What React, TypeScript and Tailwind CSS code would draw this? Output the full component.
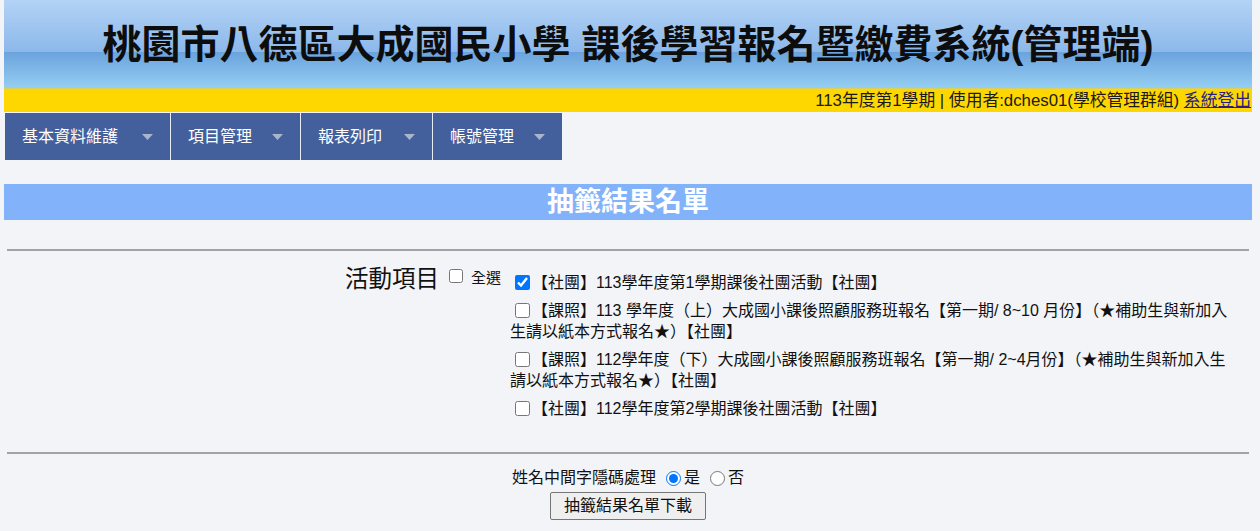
import React from "react";

const sans = "font-['Arial','Liberation_Sans','Noto_Sans_CJK_TC',sans-serif]";

function Caret() {
  return (
    <svg width="11" height="6" viewBox="0 0 11 6" className="ml-auto shrink-0">
      <path d="M0 0 L11 0 L5.5 6 Z" fill="#a9b5cf" />
    </svg>
  );
}

const navItems: { t: string; w: string }[] = [
  { t: "基本資料維護", w: "w-[165px]" },
  { t: "項目管理", w: "w-[130px]" },
  { t: "報表列印", w: "w-[132px]" },
  { t: "帳號管理", w: "w-[130px]" },
];

const items: string[] = [
  "【社團】113學年度第1學期課後社團活動【社團】",
  "【課照】113 學年度（上）大成國小課後照顧服務班報名【第一期/ 8~10 月份】（★補助生與新加入生請以紙本方式報名★）【社團】",
  "【課照】112學年度（下）大成國小課後照顧服務班報名【第一期/ 2~4月份】（★補助生與新加入生請以紙本方式報名★）【社團】",
  "【社團】112學年度第2學期課後社團活動【社團】",
];

export default function App() {
  return (
    <div className={`min-h-[531px] bg-[#f2f4f8] ${sans} text-[#111]`}>
      <div className="ml-[4px] w-[1248px]">
        {/* Header */}
        <div className="h-[88px] flex items-center justify-center bg-[linear-gradient(to_bottom,#b3d3f6_0%,#8cb8ea_59%,#6ba3dd_59.5%,#94cef2_100%)]">
          <h1 className="text-[39px] font-bold leading-none text-[#0d0d0d]">
            桃園市八德區大成國民小學 課後學習報名暨繳費系統(管理端)
          </h1>
        </div>
        {/* Yellow bar */}
        <div className="h-[24px] bg-[#ffd700] border-t border-[#d8cf60] flex items-center justify-end pr-[1px] text-[16.8px] text-[#1a1a1a]">
          <span>
            113年度第1學期 | 使用者:dches01(學校管理群組){" "}
            <a href="#" className="underline text-[#2a1d86]">系統登出</a>
          </span>
        </div>
        {/* Nav */}
        <div className="mt-[1px] ml-[1px] flex h-[47px]">
          {navItems.map((n, i) => (
            <div
              key={n.t}
              className={`flex items-center bg-[#44609c] text-white text-[16px] pl-[17px] pr-[17px] ${n.w} ${i > 0 ? "border-l border-[#e8ecf4]" : ""}`}
            >
              <span>{n.t}</span>
              <Caret />
            </div>
          ))}
        </div>
        {/* Banner */}
        <div className="mt-[24px] h-[36px] bg-[#82b2f9] flex items-center justify-center">
          <span className="text-[27px] font-bold text-white leading-none">抽籤結果名單</span>
        </div>
        {/* Form */}
        <div className="mt-[29px] mx-[3px] border-t-2 border-[#a3a3a3]" />
        <div className="flex pt-[16px]">
          <div className="w-[501px] flex justify-end items-start pr-[4px]">
            <span className="text-[23.5px] leading-[24px]">活動項目</span>
            <input type="checkbox" className="ml-[10px] mr-[8px] mt-[2px] w-[14px] h-[14px]" />
            <span className="text-[15px] leading-[24px] mt-[-1px]">全選</span>
          </div>
          <div className="ml-[5px] w-[726px] flex flex-col gap-[7px] pt-[5px] text-[16px] leading-[21px] text-[#111]">
            {items.map((t, i) => (
              <div key={i}>
                <input
                  type="checkbox"
                  defaultChecked={i === 0}
                  className="ml-[5px] mr-[2px] w-[15px] h-[15px] align-[-2px]"
                />
                {t}
              </div>
            ))}
          </div>
        </div>
        <div className="mt-[33px] mx-[3px] border-t-2 border-[#a3a3a3]" />
        <div className="pt-[14px] flex flex-col items-center text-[16px]">
          <div className="leading-[20px] flex items-center">
            <span>姓名中間字隱碼處理</span>
            <input type="radio" name="mask" defaultChecked className="ml-[10px] mr-[3px] w-[15px] h-[15px]" />
            <span>是</span>
            <input type="radio" name="mask" className="ml-[10px] mr-[3px] w-[15px] h-[15px]" />
            <span>否</span>
          </div>
          <button className="mt-[4px] px-[13px] py-[3px] leading-[20px] bg-[#efefef] border border-[#767676] rounded-[2px] text-[16px] text-[#111]">
            抽籤結果名單下載
          </button>
        </div>
      </div>
    </div>
  );
}
